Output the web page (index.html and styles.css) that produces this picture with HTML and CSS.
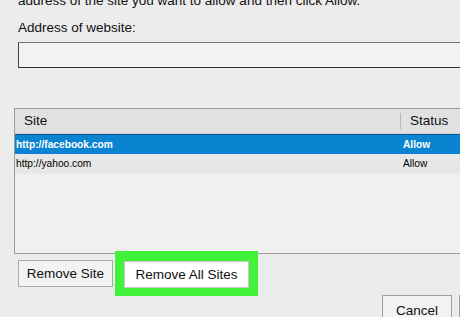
FILE: index.html
```html
<!DOCTYPE html>
<html>
<head>
<meta charset="utf-8">
<link rel="stylesheet" href="styles.css">
</head>
<body>
<div class="dialog">
  <p class="intro">address of the site you want to allow and then click Allow.</p>
  <label class="label">Address of website:</label>
  <div class="input"></div>
  <div class="table">
    <div class="thead">
      <div class="col-site">Site</div>
      <div class="col-status">Status</div>
    </div>
    <div class="row selected">
      <div class="col-site">http://facebook.com</div>
      <div class="col-status">Allow</div>
    </div>
    <div class="row alt">
      <div class="col-site">http://yahoo.com</div>
      <div class="col-status">Allow</div>
    </div>
  </div>
  <div class="actions">
    <button class="btn remove-site">Remove Site</button>
    <div class="highlight">
      <button class="btn remove-all">Remove All Sites</button>
    </div>
  </div>
  <div class="footer">
    <button class="btn cancel">Cancel</button>
    <button class="btn ok" aria-label="OK"></button>
  </div>
</div>
</body>
</html>
```
FILE: styles.css
```css
html, body {
  margin: 0;
  padding: 0;
  background: #ececec;
  overflow: hidden;
  width: 460px;
  height: 317px;
}
.dialog {
  font-family: "Liberation Sans", Arial, sans-serif;
  font-size: 13.5px;
  line-height: 16px;
  color: #111;
  padding-left: 18px;
}
.intro {
  margin: -7px 0 0 0;
  white-space: nowrap;
}
.label {
  display: block;
  margin-top: 11px;
}
.input {
  margin-top: 6px;
  height: 24px;
  width: 460px;
  background: #f2f2f2;
  border-top: 1px solid #6f7780;
  border-left: 1px solid #3c4650;
  border-bottom: 1px solid #26303a;
}
.table {
  margin-top: 40px;
  margin-left: -4px;
  width: 470px;
  height: 144px;
  border: 1px solid #9c9c9c;
  background: #f0f0f0;
}
.thead {
  display: flex;
  height: 24px;
  background: #e1e1e1;
  border-bottom: 1px solid #cfcfcf;
  font-size: 13.5px;
  align-items: center;
}
.thead .col-site {
  width: 376px;
  flex-shrink: 0;
  padding-left: 9px;
}
.thead .col-status {
  border-left: 1px solid #b8b8b8;
  height: 16px;
  padding-left: 9px;
}
.row {
  display: flex;
  height: 20px;
  align-items: center;
  font-size: 10.2px;
}
.row .col-site {
  width: 385px;
  flex-shrink: 0;
  padding-left: 1px;
}
.row .col-status {
  padding-left: 2px;
}
.selected {
  background: #0a84d0;
  color: #fff;
  font-weight: bold;
  border-top: 1px solid #0a5fa0;
  height: 19px;
}
.alt {
  background: #e7e7e7;
  color: #000;
}
.btn {
  font-family: "Liberation Sans", Arial, sans-serif;
  font-size: 13.5px;
  color: #111;
  margin: 0;
  padding: 0;
  height: 27px;
  border-radius: 0;
  flex-shrink: 0;
}
.actions {
  display: flex;
  align-items: flex-start;
  margin-top: -3px;
  gap: 2px;
  position: relative;
}
.remove-site {
  margin-top: 9px;
  width: 95px;
  background: #f3f3f3;
  border: 1px solid #a9a9a9;
}
.highlight {
  background: #41f23b;
  padding: 10px 9px 8px 9px;
}
.remove-all {
  display: block;
  width: 125px;
  background: #fff;
  border: 1px solid #c8c8c8;
}
.footer {
  display: flex;
  margin-top: -1px;
  margin-left: 364px;
  gap: 7px;
}
.cancel {
  width: 70px;
  height: 30px;
  background: #f2f2f2;
  border: 1px solid #a0a0a0;
}
.ok {
  width: 70px;
  height: 30px;
  background: #f2f2f2;
  border: 1px solid #a0a0a0;
}
```
